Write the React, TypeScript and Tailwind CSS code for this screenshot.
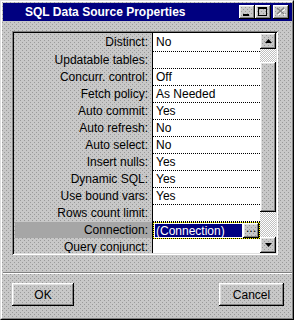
const dither =
  'bg-[#c8c8c8] bg-[conic-gradient(at_1px_1px,transparent_75%,#9a9a9a_0),conic-gradient(at_1px_1px,transparent_75%,#9a9a9a_0)] bg-[length:4px_4px] bg-[position:0_0,2px_2px]';
const raised =
  'shadow-[inset_-1px_-1px_0_#000,inset_1px_1px_0_#fff,inset_-2px_-2px_0_#808080,inset_2px_2px_0_#dfdfdf]';
const checker =
  'bg-[#c0c0c0] bg-[conic-gradient(#fff_25%,#c0c0c0_0_50%,#fff_0_75%,#c0c0c0_0)] bg-[length:2px_2px]';

const rows: [string, string][] = [
  ['Distinct:', 'No'],
  ['Updatable tables:', ''],
  ['Concurr. control:', 'Off'],
  ['Fetch policy:', 'As Needed'],
  ['Auto commit:', 'Yes'],
  ['Auto refresh:', 'No'],
  ['Auto select:', 'No'],
  ['Insert nulls:', 'Yes'],
  ['Dynamic SQL:', 'Yes'],
  ['Use bound vars:', 'Yes'],
  ['Rows count limit:', ''],
  ['Connection:', '(Connection)'],
  ['Query conjunct:', ''],
];

function TitleButton({ kind }: { kind: 'min' | 'max' | 'close' }) {
  return (
    <div className={`h-[14px] w-[16px] ${dither} ${raised}`}>
      <svg width="16" height="14" viewBox="0 0 16 14">
        {kind === 'min' && <rect x="4" y="9" width="6" height="2" fill="#000" />}
        {kind === 'max' && (
          <path d="M3 2h9v9H3z M4 4v6h7V4z" fill="#000" fillRule="evenodd" />
        )}
        {kind === 'close' && (
          <g strokeWidth="1.6">
            <path d="M5 4l7 6M12 4l-7 6" stroke="#fff" />
            <path d="M4 3l7 6M11 3l-7 6" stroke="#808080" />
          </g>
        )}
      </svg>
    </div>
  );
}

function ArrowButton({ up }: { up: boolean }) {
  return (
    <div className={`flex h-[16px] w-[16px] shrink-0 items-center justify-center ${dither} ${raised}`}>
      <svg width="7" height="4" viewBox="0 0 7 4">
        {up ? <path d="M3.5 0L7 4H0z" fill="#000" /> : <path d="M0 0h7L3.5 4z" fill="#000" />}
      </svg>
    </div>
  );
}

export default function App() {
  return (
    <div className="h-[320px] w-[294px] font-['Liberation_Sans',Arial,sans-serif] text-[12px] text-black">
      <div className="h-full w-full border border-[#dfdfdf] border-b-black border-r-black">
        <div className={`flex h-full w-full flex-col border border-white border-b-[#808080] border-r-[#808080] pl-[1px] pt-[1px] ${dither}`}>
          {/* title bar */}
          <div className="flex h-[18px] shrink-0 items-center bg-[#000080] pl-[22px] pr-[3px]">
            <span className="text-[12px] font-bold leading-none text-white">SQL Data Source Properties</span>
            <div className="ml-auto flex items-center">
              <TitleButton kind="min" />
              <TitleButton kind="max" />
              <div className="w-[2px]" />
              <TitleButton kind="close" />
            </div>
          </div>

          {/* property grid */}
          <div className="ml-[9px] mt-[10px] w-[266px] p-[2px] shadow-[inset_1px_1px_0_#808080,inset_-1px_-1px_0_#fff,inset_2px_2px_0_#000,inset_-2px_-2px_0_#dfdfdf]">
            <div className="flex h-[220px] overflow-hidden">
              <div className="flex w-[138px] shrink-0 flex-col">
                {rows.map(([label], i) => (
                  <div key={label} className={`shrink-0 ${i === 0 ? 'h-[19px]' : 'h-[17px]'}`}>
                    <div
                      className={`flex items-center justify-end pr-[4px] ${
                        label === 'Connection:' ? 'ml-[1px] h-[16px] bg-[#a6a6a6]' : 'h-full pb-[1px]'
                      }`}
                    >
                      {label}
                    </div>
                  </div>
                ))}
              </div>
              <div className="flex w-[108px] shrink-0 flex-col border-l border-black bg-white">
                {rows.map(([label, value], i) =>
                  label === 'Connection:' ? (
                    <div key={label} className="h-[17px] shrink-0 border border-dotted border-black bg-[#ffff00]">
                      <div className="flex h-full bg-white">
                        <div className="mx-[1px] my-[1px] flex h-[13px] w-[87px] items-center bg-[#000080] pl-[1px] text-white">
                          {value}
                        </div>
                        <div className={`flex h-[15px] w-[16px] items-start justify-center leading-[11px] ${dither} ${raised}`}>
                          ...
                        </div>
                      </div>
                    </div>
                  ) : (
                    <div
                      key={label}
                      className={`flex shrink-0 items-center border-b border-dotted border-black pb-[1px] pl-[3px] ${
                        i === 0 ? 'h-[19px]' : 'h-[17px]'
                      }`}
                    >
                      {value}
                    </div>
                  ),
                )}
              </div>
              <div className={`flex w-[16px] shrink-0 flex-col ${checker}`}>
                <ArrowButton up />
                <div className="h-[13px] shrink-0" />
                <div className={`h-[150px] shrink-0 ${dither} ${raised}`} />
                <div className="flex-1" />
                <ArrowButton up={false} />
              </div>
            </div>
          </div>

          {/* separator */}
          <div className="mt-[17px] h-[2px] shrink-0 border-t border-b border-t-[#808080] border-b-white" />

          {/* buttons */}
          <div className="mt-[9px] flex pl-[9px] pr-[8px]">
            <div className={`flex h-[23px] w-[62px] items-center justify-center ${raised}`}>OK</div>
            <div className={`ml-auto flex h-[23px] w-[65px] items-center justify-center ${raised}`}>Cancel</div>
          </div>
        </div>
      </div>
    </div>
  );
}
